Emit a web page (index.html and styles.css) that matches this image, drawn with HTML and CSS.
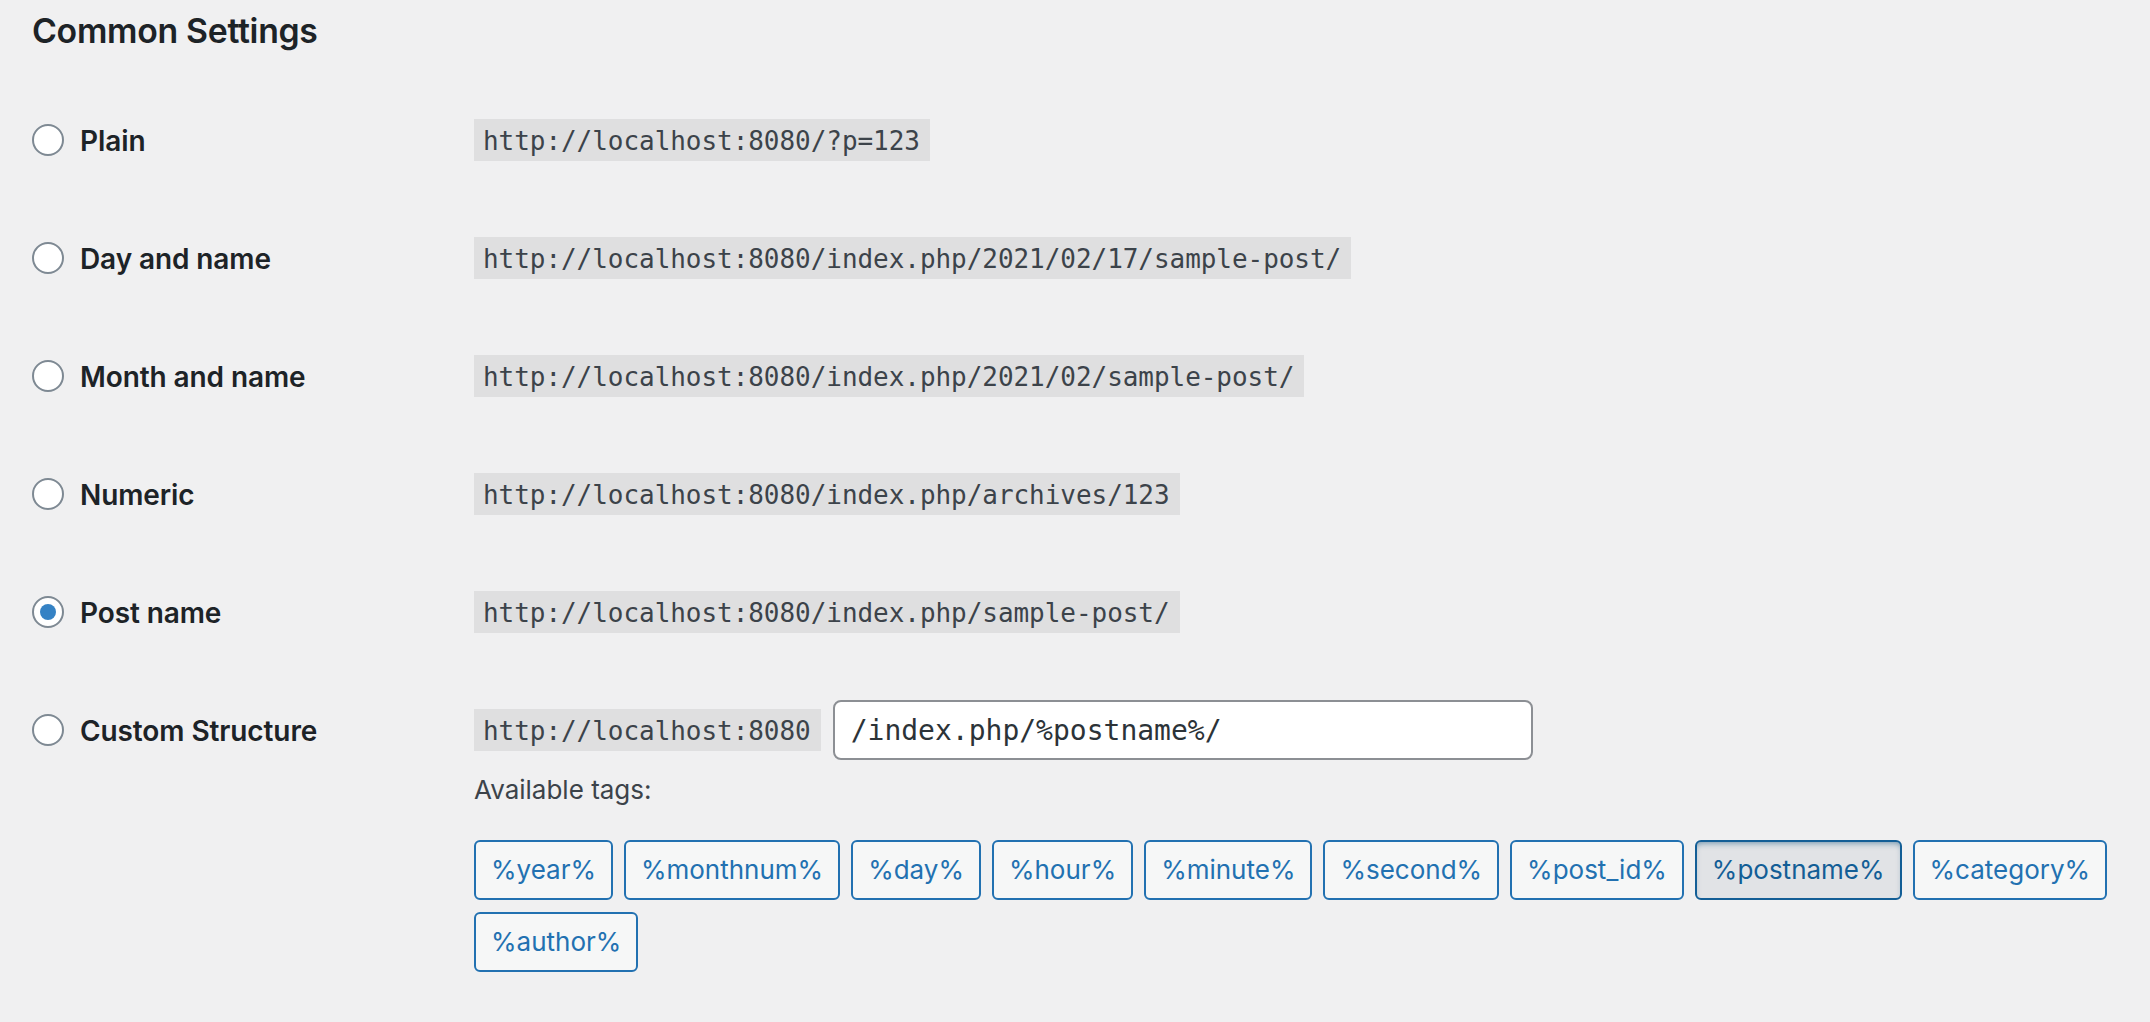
FILE: index.html
```html
<!DOCTYPE html>
<html lang="en">
<head>
<meta charset="utf-8">
<title>Permalink Settings</title>
<link rel="stylesheet" href="styles.css">
</head>
<body>
<div class="wrap">
  <h2 class="title">Common Settings</h2>
  <div class="form">
    <div class="row">
      <label class="opt"><input type="radio" name="selection"><span>Plain</span></label>
      <div class="val"><div class="line"><code>http://localhost:8080/?p=123</code></div></div>
    </div>
    <div class="row">
      <label class="opt"><input type="radio" name="selection"><span>Day and name</span></label>
      <div class="val"><div class="line"><code>http://localhost:8080/index.php/2021/02/17/sample-post/</code></div></div>
    </div>
    <div class="row">
      <label class="opt"><input type="radio" name="selection"><span>Month and name</span></label>
      <div class="val"><div class="line"><code>http://localhost:8080/index.php/2021/02/sample-post/</code></div></div>
    </div>
    <div class="row">
      <label class="opt"><input type="radio" name="selection"><span>Numeric</span></label>
      <div class="val"><div class="line"><code>http://localhost:8080/index.php/archives/123</code></div></div>
    </div>
    <div class="row">
      <label class="opt"><input type="radio" name="selection" checked><span>Post name</span></label>
      <div class="val"><div class="line"><code>http://localhost:8080/index.php/sample-post/</code></div></div>
    </div>
    <div class="row">
      <label class="opt"><input type="radio" name="selection"><span>Custom Structure</span></label>
      <div class="val">
        <div class="line">
          <code>http://localhost:8080</code>
          <input class="structure" type="text" value="/index.php/%postname%/">
        </div>
        <p class="avail">Available tags:</p>
        <ul class="tags">
          <li><button class="tag" type="button">%year%</button></li>
          <li><button class="tag" type="button">%monthnum%</button></li>
          <li><button class="tag" type="button">%day%</button></li>
          <li><button class="tag" type="button">%hour%</button></li>
          <li><button class="tag" type="button">%minute%</button></li>
          <li><button class="tag" type="button">%second%</button></li>
          <li><button class="tag" type="button">%post_id%</button></li>
          <li><button class="tag active" type="button">%postname%</button></li>
          <li><button class="tag" type="button">%category%</button></li>
          <li><button class="tag" type="button">%author%</button></li>
        </ul>
      </div>
    </div>
  </div>
</div>
</body>
</html>
```
FILE: styles.css
```css
html, body {
  margin: 0;
  padding: 0;
  background: #f0f0f1;
}
body {
  font-family: Inter, "Noto Sans", "Liberation Sans", sans-serif;
  color: #3c434a;
  font-size: 26px;
}
.wrap {
  padding: 0 32px;
}
.title {
  margin: 9px 0 28px;
  font-size: 33.8px;
  line-height: 44px;
  font-weight: 600;
  color: #1d2327;
  letter-spacing: -0.3px;
}
.row {
  display: grid;
  grid-template-columns: 442px 1fr;
  padding: 29px 0;
}
.opt {
  display: flex;
  align-items: center;
  gap: 16px;
  height: 60px;
  font-size: 28px;
  font-weight: 600;
  color: #1d2327;
  letter-spacing: -0.1px;
}
.opt span {
  position: relative;
  top: 1px;
}
.opt input {
  appearance: none;
  -webkit-appearance: none;
  margin: 0;
  width: 32px;
  height: 32px;
  border: 2px solid #7e8993;
  border-radius: 50%;
  background: #fff;
  display: flex;
  align-items: center;
  justify-content: center;
  flex: none;
}
.opt input:checked::before {
  content: "";
  width: 16px;
  height: 16px;
  border-radius: 50%;
  background: #3582c4;
}
.line {
  display: flex;
  align-items: center;
  gap: 12px;
  height: 60px;
}
code {
  display: inline-block;
  font-family: "DejaVu Sans Mono", "Liberation Mono", monospace;
  font-size: 26px;
  line-height: 32px;
  padding: 6px 10px 4px 9px;
  background: #dfdfe0;
  color: #3c434a;
  letter-spacing: -0.05px;
}
.structure {
  box-sizing: border-box;
  width: 700px;
  height: 60px;
  margin: 0;
  padding: 0 16px;
  border: 2px solid #8c8f94;
  border-radius: 8px;
  background: #fff;
  font-family: "DejaVu Sans Mono", "Liberation Mono", monospace;
  font-size: 28px;
  color: #2c3338;
  outline: none;
}
.avail {
  margin: 12px 0 0;
  line-height: 36px;
  font-size: 26px;
  color: #3c434a;
}
.tags {
  list-style: none;
  margin: 32px 0 0;
  padding: 0;
  display: flex;
  flex-wrap: wrap;
  gap: 12px 11px;
}
.tag {
  box-sizing: border-box;
  height: 60px;
  padding: 0 15px;
  margin: 0;
  border: 2px solid #2271b1;
  border-radius: 6px;
  background: #f6f7f7;
  color: #2271b1;
  font-family: Inter, "Noto Sans", "Liberation Sans", sans-serif;
  font-size: 26px;
  line-height: 56px;
  cursor: pointer;
}
.tag.active {
  background: #e1e3e6;
  border-color: #135e96;
  color: #135e96;
  box-shadow: inset 0 4px 6px -3px rgba(10, 75, 120, 0.55);
}
```
